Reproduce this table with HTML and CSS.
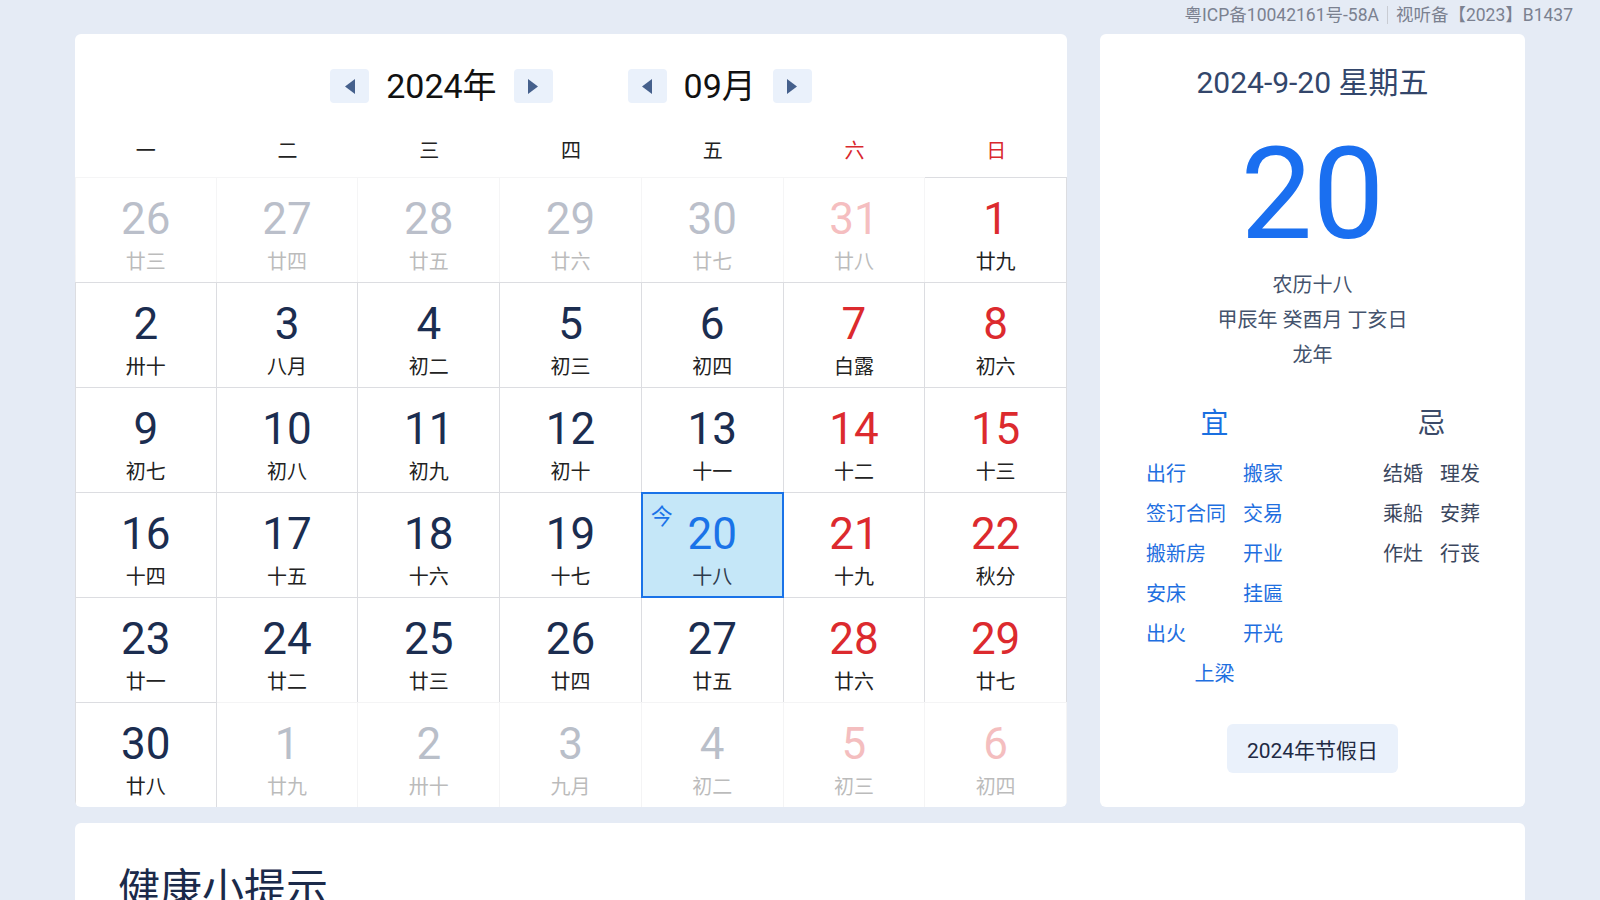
FILE: index.html
```html
<!DOCTYPE html>
<html lang="zh-CN">
<head>
    <meta charset="UTF-8">
    <meta name="viewport" content="width=device-width, initial-scale=1.0">
    <title>万年历</title>
    <link rel="stylesheet" href="styles.css">
</head>
<body>
<div class="topbar">
    <span>粤ICP备10042161号-58A</span><span class="sep"></span><span>视听备【2023】B1437</span>
</div>
<div class="container">
    <div class="calendar-card">
        <div class="nav">
            <div class="nav-group">
                <button class="nav-btn" type="button"><svg width="12" height="15" viewBox="0 0 12 15"><polygon points="11,0 11,15 1,7.5" fill="#45608c"/></svg></button>
                <span class="nav-text">2024年</span>
                <button class="nav-btn" type="button"><svg width="12" height="15" viewBox="0 0 12 15"><polygon points="1,0 1,15 11,7.5" fill="#45608c"/></svg></button>
            </div>
            <div class="nav-group">
                <button class="nav-btn" type="button"><svg width="12" height="15" viewBox="0 0 12 15"><polygon points="11,0 11,15 1,7.5" fill="#45608c"/></svg></button>
                <span class="nav-text">09月</span>
                <button class="nav-btn" type="button"><svg width="12" height="15" viewBox="0 0 12 15"><polygon points="1,0 1,15 11,7.5" fill="#45608c"/></svg></button>
            </div>
        </div>
        <div class="weekdays">
            <div>一</div><div>二</div><div>三</div><div>四</div><div>五</div>
            <div class="red">六</div><div class="red">日</div>
        </div>
        <div class="days">
            <div class="cell fade"><span class="num">26</span><span class="lunar">廿三</span></div>
            <div class="cell fade"><span class="num">27</span><span class="lunar">廿四</span></div>
            <div class="cell fade"><span class="num">28</span><span class="lunar">廿五</span></div>
            <div class="cell fade"><span class="num">29</span><span class="lunar">廿六</span></div>
            <div class="cell fade"><span class="num">30</span><span class="lunar">廿七</span></div>
            <div class="cell fade red"><span class="num">31</span><span class="lunar">廿八</span></div>
            <div class="cell red"><span class="num">1</span><span class="lunar">廿九</span></div>

            <div class="cell"><span class="num">2</span><span class="lunar">卅十</span></div>
            <div class="cell"><span class="num">3</span><span class="lunar">八月</span></div>
            <div class="cell"><span class="num">4</span><span class="lunar">初二</span></div>
            <div class="cell"><span class="num">5</span><span class="lunar">初三</span></div>
            <div class="cell"><span class="num">6</span><span class="lunar">初四</span></div>
            <div class="cell red"><span class="num">7</span><span class="lunar">白露</span></div>
            <div class="cell red"><span class="num">8</span><span class="lunar">初六</span></div>

            <div class="cell"><span class="num">9</span><span class="lunar">初七</span></div>
            <div class="cell"><span class="num">10</span><span class="lunar">初八</span></div>
            <div class="cell"><span class="num">11</span><span class="lunar">初九</span></div>
            <div class="cell"><span class="num">12</span><span class="lunar">初十</span></div>
            <div class="cell"><span class="num">13</span><span class="lunar">十一</span></div>
            <div class="cell red"><span class="num">14</span><span class="lunar">十二</span></div>
            <div class="cell red"><span class="num">15</span><span class="lunar">十三</span></div>

            <div class="cell"><span class="num">16</span><span class="lunar">十四</span></div>
            <div class="cell"><span class="num">17</span><span class="lunar">十五</span></div>
            <div class="cell"><span class="num">18</span><span class="lunar">十六</span></div>
            <div class="cell"><span class="num">19</span><span class="lunar">十七</span></div>
            <div class="cell today"><span class="today-mark">今</span><span class="num">20</span><span class="lunar">十八</span></div>
            <div class="cell red"><span class="num">21</span><span class="lunar">十九</span></div>
            <div class="cell red"><span class="num">22</span><span class="lunar">秋分</span></div>

            <div class="cell"><span class="num">23</span><span class="lunar">廿一</span></div>
            <div class="cell"><span class="num">24</span><span class="lunar">廿二</span></div>
            <div class="cell"><span class="num">25</span><span class="lunar">廿三</span></div>
            <div class="cell"><span class="num">26</span><span class="lunar">廿四</span></div>
            <div class="cell"><span class="num">27</span><span class="lunar">廿五</span></div>
            <div class="cell red"><span class="num">28</span><span class="lunar">廿六</span></div>
            <div class="cell red"><span class="num">29</span><span class="lunar">廿七</span></div>

            <div class="cell"><span class="num">30</span><span class="lunar">廿八</span></div>
            <div class="cell fade"><span class="num">1</span><span class="lunar">廿九</span></div>
            <div class="cell fade"><span class="num">2</span><span class="lunar">卅十</span></div>
            <div class="cell fade"><span class="num">3</span><span class="lunar">九月</span></div>
            <div class="cell fade"><span class="num">4</span><span class="lunar">初二</span></div>
            <div class="cell fade red"><span class="num">5</span><span class="lunar">初三</span></div>
            <div class="cell fade red"><span class="num">6</span><span class="lunar">初四</span></div>
        </div>
    </div>

    <div class="info-card">
        <div class="info-date">2024-9-20 星期五</div>
        <div class="info-day">20</div>
        <div class="info-lunar">农历十八</div>
        <div class="info-lunar">甲辰年 癸酉月 丁亥日</div>
        <div class="info-lunar">龙年</div>
        <div class="yiji">
            <div class="yi">
                <div class="yiji-title">宜</div>
                <div class="yi-list">
                    <span>出行</span><span>搬家</span>
                    <span>签订合同</span><span>交易</span>
                    <span>搬新房</span><span>开业</span>
                    <span>安床</span><span>挂匾</span>
                    <span>出火</span><span>开光</span>
                    <span class="last">上梁</span>
                </div>
            </div>
            <div class="ji">
                <div class="yiji-title">忌</div>
                <div class="ji-list">
                    <span>结婚</span><span>理发</span>
                    <span>乘船</span><span>安葬</span>
                    <span>作灶</span><span>行丧</span>
                </div>
            </div>
        </div>
        <button class="holiday-btn" type="button">2024年节假日</button>
    </div>
</div>

<div class="container">
    <div class="tips-card">
        <h2>健康小提示</h2>
    </div>
</div>
</body>
</html>
```

FILE: styles.css
```css
body {
    margin: 0;
    background-color: #e5ebf5;
    font-family: Roboto, "Noto Sans CJK SC", sans-serif;
    color: #222;
}

.topbar {
    height: 34px;
    line-height: 30px;
    padding-right: 27px;
    text-align: right;
    font-size: 17.5px;
    color: #7b8190;
}

.topbar .sep {
    display: inline-block;
    width: 1px;
    height: 18px;
    margin: 0 8px;
    background-color: #c9ccd3;
    vertical-align: -3px;
}

.container {
    width: 1450px;
    margin: 0 auto;
    display: flex;
    gap: 33px;
}

.calendar-card {
    width: 992px;
    background-color: #fff;
    border-radius: 6px;
    padding-top: 35px;
    overflow: hidden;
}

.nav {
    display: flex;
    justify-content: center;
    gap: 75px;
    height: 34px;
    margin-bottom: 22px;
}

.nav-group {
    display: flex;
    align-items: center;
    gap: 17px;
}

.nav-btn {
    width: 39px;
    height: 34px;
    border: none;
    border-radius: 4px;
    background-color: #eaf1fb;
    padding: 0;
    display: flex;
    align-items: center;
    justify-content: center;
    cursor: pointer;
}

.nav-text {
    font-size: 34px;
    line-height: 34px;
    color: #111;
}

.weekdays {
    display: grid;
    grid-template-columns: repeat(7, 1fr);
    height: 52px;
    line-height: 52px;
    text-align: center;
    font-size: 20px;
    color: #222;
}

.weekdays .red {
    color: #d9282d;
}

.days {
    display: grid;
    grid-template-columns: repeat(7, 1fr);
    grid-auto-rows: 105px;
}

.cell {
    display: flex;
    flex-direction: column;
    align-items: center;
    box-sizing: border-box;
    padding-top: 16px;
    border-top: 1px solid #dcdde1;
    border-right: 1px solid #dcdde1;
}

.cell:nth-child(7n + 1) {
    border-left: 1px solid #dcdde1;
}

.cell .num {
    font-size: 44px;
    line-height: 50px;
    color: #1b2d50;
}

.cell .lunar {
    font-size: 20px;
    line-height: 28px;
    margin-top: 4px;
    color: #222;
}

.cell.red .num {
    color: #dc2a2e;
}

.cell.fade {
    opacity: 0.3;
}

.cell.today {
    position: relative;
    background-color: #c5e7f8;
}

.cell.today::after {
    content: '';
    position: absolute;
    top: -1px;
    left: -1px;
    right: -1px;
    bottom: -1px;
    border: 2px solid #1a73e8;
    z-index: 1;
}

.cell.today .num {
    color: #1a73e8;
}

.cell.today .lunar {
    color: #2e3b4c;
}

.today-mark {
    position: absolute;
    top: 13px;
    left: 9px;
    font-size: 22px;
    line-height: 22px;
    color: #1a73e8;
}

.info-card {
    width: 425px;
    background-color: #fff;
    border-radius: 6px;
    padding-top: 29px;
    display: flex;
    flex-direction: column;
    align-items: center;
    text-align: center;
}

.info-date {
    font-size: 30px;
    line-height: 40px;
    color: #33466b;
}

.info-day {
    margin-top: 27px;
    font-size: 128px;
    line-height: 128px;
    color: #1a6ff0;
}

.info-day + .info-lunar {
    margin-top: 10px;
}

.info-lunar {
    font-size: 20px;
    line-height: 35px;
    color: #44536d;
}

.yiji {
    align-self: stretch;
    display: flex;
    justify-content: space-between;
    padding: 0 45px 0 46px;
    margin-top: 33px;
}

.yiji-title {
    font-size: 28px;
    line-height: 36px;
    margin-bottom: 12px;
}

.yi .yiji-title {
    color: #1a6fe0;
}

.ji .yiji-title {
    color: #3b4a68;
}

.yi-list,
.ji-list {
    display: grid;
    font-size: 20px;
    line-height: 40px;
    text-align: left;
}

.yi-list {
    grid-template-columns: 97px auto;
    color: #1f6fe0;
}

.yi-list .last {
    grid-column: 1 / -1;
    text-align: center;
}

.ji-list {
    grid-template-columns: 57px auto;
    color: #3b475e;
}

.holiday-btn {
    margin-top: 30px;
    height: 49px;
    padding: 0 20px;
    border: none;
    border-radius: 6px;
    background-color: #eaf1fb;
    font-family: Roboto, "Noto Sans CJK SC", sans-serif;
    font-size: 21px;
    color: #1f2a44;
    cursor: pointer;
}

.tips-card {
    flex: 1;
    margin-top: 16px;
    background-color: #fff;
    border-radius: 6px;
    padding: 37px 43px 40px;
}

.tips-card h2 {
    margin: 0;
    font-size: 42px;
    line-height: 60px;
    font-weight: normal;
    color: #1b2a4a;
}
```
